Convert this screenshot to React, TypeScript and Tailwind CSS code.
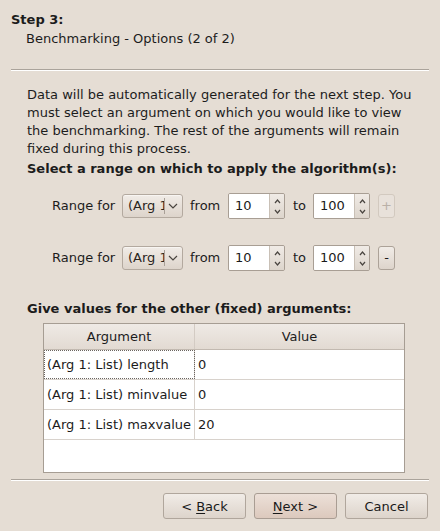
import React from 'react';

const rows = [
  { name: '(Arg 1: List) length', value: '0' },
  { name: '(Arg 1: List) minvalue', value: '0' },
  { name: '(Arg 1: List) maxvalue', value: '20' },
];

function Chevron({ up = false, size = 7 }: { up?: boolean; size?: number }) {
  const h = Math.round(size / 2) + 1;
  return (
    <svg width={size + 2} height={h + 1} viewBox={`0 0 ${size + 2} ${h + 1}`} className="block">
      <polyline
        points={up ? `1,${h} ${(size + 2) / 2},1 ${size + 1},${h}` : `1,1 ${(size + 2) / 2},${h} ${size + 1},1`}
        fill="none"
        stroke="#4a4540"
        strokeWidth="1.2"
      />
    </svg>
  );
}

function Separator() {
  return (
    <div className="ml-[11px] w-[418px]">
      <div className="h-px bg-[#aaa39b]" />
      <div className="h-px bg-white" />
    </div>
  );
}

function Combo() {
  return (
    <div className="flex h-[24px] w-[61px] flex-none items-center rounded-[3px] border border-[#b3a99f] bg-gradient-to-b from-[#f1ece7] to-[#ddd4cb] shadow-[inset_0_1px_0_#f8f5f2]">
      <span className="ml-[5px] w-[36px] flex-none overflow-hidden whitespace-nowrap text-[#2a2520]">(Arg 1</span>
      <span className="h-[16px] w-px flex-none bg-[#a9a097]" />
      <span className="ml-[3px] flex-none">
        <Chevron size={8} />
      </span>
    </div>
  );
}

function Spin({ value }: { value: string }) {
  return (
    <div className="flex h-[26px] w-[57px] flex-none overflow-hidden rounded-[2px] border border-[#a89e94]">
      <div className="flex flex-1 items-center bg-white pl-[6px] text-[#1a1a1a]">{value}</div>
      <div className="flex w-[15px] flex-col items-center justify-center gap-[5px] border-l border-[#c9c0b6] bg-gradient-to-b from-[#f0ebe6] to-[#ddd5cc]">
        <Chevron up size={5} />
        <Chevron size={5} />
      </div>
    </div>
  );
}

function RangeRow({ sign, disabled }: { sign: string; disabled?: boolean }) {
  return (
    <div className="flex h-[26px] items-center whitespace-nowrap pl-[25px]">
      <span className="w-[62px] flex-none">Range for</span>
      <span className="ml-[8px] flex-none">
        <Combo />
      </span>
      <span className="ml-[7px] w-[30px] flex-none">from</span>
      <span className="ml-[8px] flex-none">
        <Spin value="10" />
      </span>
      <span className="ml-[8px] w-[12px] flex-none">to</span>
      <span className="ml-[8px] flex-none">
        <Spin value="100" />
      </span>
      <button
        className={
          disabled
            ? 'ml-[8px] flex h-[24px] w-[17px] flex-none items-center justify-center rounded-[3px] border border-[#d2c9bf] bg-[#e8e1da] text-[#b9b0a7]'
            : 'ml-[8px] flex h-[24px] w-[17px] flex-none items-center justify-center rounded-[3px] border border-[#aca298] bg-gradient-to-b from-[#f1ece7] to-[#ddd4cb] text-[#1a1a1a]'
        }
      >
        {sign}
      </button>
    </div>
  );
}

function WizardButton({ children, primary }: { children: React.ReactNode; primary?: boolean }) {
  return (
    <button
      className={
        primary
          ? 'flex h-[26px] w-[83px] items-center justify-center rounded-[3px] border border-[#a99d93] bg-gradient-to-b from-[#ece0d8] to-[#dcc9bd] text-[#1a1a1a]'
          : 'flex h-[26px] w-[83px] items-center justify-center rounded-[3px] border border-[#b0a69c] bg-gradient-to-b from-[#f1ece7] to-[#ddd4cb] text-[#1a1a1a]'
      }
    >
      {children}
    </button>
  );
}

export default function App() {
  return (
    <div className="h-[531px] w-[440px] overflow-hidden bg-[#e5ddd4] font-['DejaVu_Sans',sans-serif] text-[13px] leading-[19px] text-[#1c1c1c]">
      {/* header */}
      <div className="pl-[11px] pt-[10px]">
        <div className="font-bold">Step 3:</div>
        <div className="pl-[15px]">Benchmarking - Options (2 of 2)</div>
      </div>

      <div className="mt-[21px]">
        <Separator />
      </div>

      {/* body */}
      <div className="mt-[15px] px-[27px] leading-[18px]">
        <p>
          <span className="block whitespace-nowrap">Data will be automatically generated for the next step. You</span>
          <span className="block whitespace-nowrap">must select an argument on which you would like to view</span>
          <span className="block whitespace-nowrap">the benchmarking. The rest of the arguments will remain</span>
          <span className="block whitespace-nowrap">fixed during this process.</span>
        </p>
        <div className="mt-[2px] font-bold">Select a range on which to apply the algorithm(s):</div>

        <div className="mt-[15px] flex flex-col gap-[26px]">
          <RangeRow sign="+" disabled />
          <RangeRow sign="-" />
        </div>

        <div className="mt-[29px] font-bold">Give values for the other (fixed) arguments:</div>

        <div className="ml-[16px] mt-[5px] w-[362px] border border-[#a69d93] bg-white">
          <div className="grid h-[26px] grid-cols-[151px_1fr] border-b border-[#c2b9b0] bg-gradient-to-b from-[#efeae5] to-[#e2dad2]">
            <div className="flex items-center justify-center border-r border-[#d3cbc3]">Argument</div>
            <div className="flex items-center justify-center">Value</div>
          </div>
          {rows.map((r, i) => (
            <div key={r.name} className="grid h-[30px] grid-cols-[151px_1fr] border-b border-[#d8d2cc]">
              <div
                className={
                  i === 0
                    ? 'flex items-center whitespace-nowrap border-r border-[#d8d2cc] pl-[3px] outline-1 outline-dotted outline-offset-[-1px] outline-[#6b6560]'
                    : 'flex items-center whitespace-nowrap border-r border-[#d8d2cc] pl-[3px]'
                }
              >
                {r.name}
              </div>
              <div className="flex items-center pl-[3px]">{r.value}</div>
            </div>
          ))}
          <div className="h-[32px]" />
        </div>
      </div>

      <div className="mt-[6px]">
        <Separator />
      </div>

      {/* buttons */}
      <div className="mt-[12px] flex justify-end gap-[8px] pr-[12px]">
        <WizardButton>
          &lt; <span className="ml-[4px] underline underline-offset-2">B</span>ack
        </WizardButton>
        <WizardButton primary>
          <span className="underline underline-offset-2">N</span>ext &gt;
        </WizardButton>
        <WizardButton>Cancel</WizardButton>
      </div>
    </div>
  );
}
